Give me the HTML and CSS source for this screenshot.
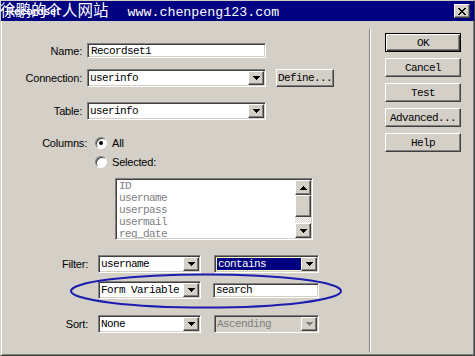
FILE: index.html
```html
<!DOCTYPE html>
<html lang="zh-CN">
<head>
  <meta charset="UTF-8">
  <title>Recordset</title>
  <link rel="stylesheet" href="styles.css">
</head>
<body>
  <div class="window">

    <!-- Title bar -->
    <div class="titlebar">
      <span class="title">Recordset</span>
      <span class="watermark">徐鹏的个人网站<span class="url">www.chenpeng123.com</span></span>
      <span class="close">
        <svg width="8" height="7" viewBox="0 0 8 7" shape-rendering="crispEdges">
          <path d="M0 0h2v1h1v1h2v-1h1v-1h2v1h-1v1h-1v1h-1v1h1v1h1v1h1v1h-2v-1h-1v-1h-2v1h-1v1h-2v-1h1v-1h1v-1h1v-1h-1v-1h-1v-1h-1z"/>
        </svg>
      </span>
    </div>

    <div class="dialog">
      <!-- Left: recordset form -->
      <div class="form">
        <div class="row row-name">
          <span class="label">Name:</span>
          <div class="field wide mono">Recordset1</div>
        </div>

        <div class="row row-connection">
          <span class="label">Connection:</span>
          <div class="combo wide">
            <span class="value mono">userinfo</span>
            <span class="arrow"><svg width="7" height="4" shape-rendering="crispEdges"><path d="M0 0h7v1h-1v1h-1v1h-1v1h-1v-1h-1v-1h-1v-1h-1z"/></svg></span>
          </div>
          <div class="btn define mono">Define...</div>
        </div>

        <div class="row row-table">
          <span class="label">Table:</span>
          <div class="combo wide">
            <span class="value mono">userinfo</span>
            <span class="arrow"><svg width="7" height="4" shape-rendering="crispEdges"><path d="M0 0h7v1h-1v1h-1v1h-1v1h-1v-1h-1v-1h-1v-1h-1z"/></svg></span>
          </div>
        </div>

        <div class="row row-columns">
          <span class="label label-columns">Columns:</span>
          <span class="radio checked"></span>
          <span class="radio-text">All</span>
        </div>
        <div class="row row-selected">
          <span class="radio"></span>
          <span class="radio-text">Selected:</span>
        </div>

        <div class="listbox">
          <div class="items mono">
            <div>ID</div>
            <div>username</div>
            <div>userpass</div>
            <div>usermail</div>
            <div>reg_date</div>
          </div>
          <div class="scrollbar">
            <span class="scroll-btn"><svg width="7" height="4" shape-rendering="crispEdges"><path d="M3 0h1v1h1v1h1v1h1v1h-7v-1h1v-1h1v-1h1z"/></svg></span>
            <span class="thumb"></span>
            <span class="track"></span>
            <span class="scroll-btn"><svg width="7" height="4" shape-rendering="crispEdges"><path d="M0 0h7v1h-1v1h-1v1h-1v1h-1v-1h-1v-1h-1v-1h-1z"/></svg></span>
          </div>
        </div>

        <div class="filters">
          <div class="row row-filter">
            <span class="label">Filter:</span>
            <div class="combo narrow">
              <span class="value mono">username</span>
              <span class="arrow"><svg width="7" height="4" shape-rendering="crispEdges"><path d="M0 0h7v1h-1v1h-1v1h-1v1h-1v-1h-1v-1h-1v-1h-1z"/></svg></span>
            </div>
            <div class="combo mid">
              <span class="value mono"><span class="selected">contains</span></span>
              <span class="arrow"><svg width="7" height="4" shape-rendering="crispEdges"><path d="M0 0h7v1h-1v1h-1v1h-1v1h-1v-1h-1v-1h-1v-1h-1z"/></svg></span>
            </div>
          </div>

          <div class="row row-variable">
            <span class="label"></span>
            <div class="combo narrow">
              <span class="value mono">Form Variable</span>
              <span class="arrow"><svg width="7" height="4" shape-rendering="crispEdges"><path d="M0 0h7v1h-1v1h-1v1h-1v1h-1v-1h-1v-1h-1v-1h-1z"/></svg></span>
            </div>
            <div class="field search mono">search</div>
          </div>

          <div class="row row-sort">
            <span class="label">Sort:</span>
            <div class="combo narrow">
              <span class="value mono">None</span>
              <span class="arrow"><svg width="7" height="4" shape-rendering="crispEdges"><path d="M0 0h7v1h-1v1h-1v1h-1v1h-1v-1h-1v-1h-1v-1h-1z"/></svg></span>
            </div>
            <div class="combo mid disabled">
              <span class="value mono">Ascending</span>
              <span class="arrow"><svg width="7" height="4" shape-rendering="crispEdges"><path d="M0 0h7v1h-1v1h-1v1h-1v1h-1v-1h-1v-1h-1v-1h-1z"/></svg></span>
            </div>
          </div>

          <!-- hand-drawn highlight round the variable row -->
          <svg class="highlight" width="274" height="38" viewBox="0 0 274 38">
            <ellipse cx="137" cy="19" rx="135" ry="16.5" fill="none" stroke="#1c1cb0" stroke-width="2"/>
          </svg>
        </div>
      </div>

      <div class="separator"></div>

      <!-- Right: dialog buttons -->
      <div class="buttons">
        <div class="btn default mono">OK</div>
        <div class="btn mono">Cancel</div>
        <div class="btn mono">Test</div>
        <div class="btn mono">Advanced...</div>
        <div class="btn mono">Help</div>
      </div>
    </div>
  </div>
</body>
</html>
```

FILE: styles.css
```css
/* General styles */
body {
  margin: 0;
  background-color: #d4d0c8;
  font-family: 'Liberation Sans', Arial, sans-serif;
  font-size: 11px;
  color: #000;
}

.mono {
  font-family: 'Liberation Mono', 'Courier New', monospace;
  font-size: 11px;
  letter-spacing: -0.6px;
}

.window {
  width: 475px;
  height: 356px;
  box-sizing: border-box;
  border: 1px solid;
  border-color: #d4d0c8 #404040 #404040 #d4d0c8;
  box-shadow: inset 1px 1px #fff, inset -1px -1px #808080;
  display: flex;
  flex-direction: column;
}

/* Title bar */
.titlebar {
  position: relative;
  height: 20px;
  background-color: #000080;
  color: #fff;
  display: flex;
  align-items: center;
  flex-shrink: 0;
}

.title {
  font-weight: bold;
  margin-left: 5px;
}

.watermark {
  position: absolute;
  left: -1px;
  top: -1px;
  font-family: 'Noto Sans CJK SC', sans-serif;
  font-size: 15.5px;
  line-height: 18px;
  white-space: nowrap;
  color: #fff;
}

.watermark .url {
  font-family: 'Liberation Mono', monospace;
  font-size: 13.3px;
  margin-left: 19px;
}

.close {
  margin-left: auto;
  margin-right: 4px;
  width: 16px;
  height: 14px;
  box-sizing: border-box;
  background-color: #d4d0c8;
  border: 1px solid;
  border-color: #fff #404040 #404040 #fff;
  box-shadow: inset -1px -1px #808080;
  display: flex;
  align-items: center;
  justify-content: center;
}

/* Dialog body */
.dialog {
  display: flex;
  flex: 1;
}

.form {
  width: 368px;
  padding-top: 22px;
  flex-shrink: 0;
}

.row {
  display: flex;
  align-items: center;
}

.label {
  width: 81px;
  margin-right: 5px;
  text-align: right;
  flex-shrink: 0;
  letter-spacing: -0.2px;
}

.row-name { height: 15px; }
.row-connection { height: 18px; margin-top: 11px; }
.row-table { height: 18px; margin-top: 15px; }
.row-columns { height: 14px; margin-top: 16px; }
.row-selected { height: 14px; margin-top: 5px; padding-left: 94px; }

.label-columns {
  width: 86px;
  margin-right: 8px;
}

.radio-text {
  margin-left: 5px;
  letter-spacing: -0.2px;
}

.radio {
  position: relative;
  width: 12px;
  height: 12px;
  box-sizing: border-box;
  border-radius: 50%;
  background-color: #fff;
  border: 1px solid;
  border-color: #808080 #fff #fff #808080;
  box-shadow: inset 1px 1px #404040;
}

.radio.checked::after {
  content: '';
  position: absolute;
  left: 3px;
  top: 3px;
  width: 4px;
  height: 4px;
  border-radius: 50%;
  background-color: #000;
}

/* Fields and combo boxes */
.field {
  height: 15px;
  box-sizing: border-box;
  background-color: #fff;
  border: 1px solid;
  border-color: #808080 #fff #fff #808080;
  box-shadow: inset 1px 1px #404040, inset -1px -1px #d4d0c8;
  padding-left: 3px;
  display: flex;
  align-items: center;
}

.combo {
  height: 18px;
  box-sizing: border-box;
  background-color: #fff;
  border: 1px solid;
  border-color: #808080 #fff #fff #808080;
  box-shadow: inset 1px 1px #404040, inset -1px -1px #d4d0c8;
  padding: 1px;
  display: flex;
}

.combo .value {
  flex: 1;
  display: flex;
  align-items: center;
  padding-left: 1px;
  white-space: nowrap;
  overflow: hidden;
}

.combo .arrow {
  width: 16px;
  box-sizing: border-box;
  background-color: #d4d0c8;
  border: 1px solid;
  border-color: #fff #404040 #404040 #fff;
  box-shadow: inset -1px -1px #808080;
  display: flex;
  align-items: center;
  justify-content: center;
}

.combo.disabled {
  background-color: #d4d0c8;
}

.combo.disabled .value {
  color: #808080;
}

.combo.disabled svg {
  fill: #808080;
}

.selected {
  background-color: #000080;
  color: #fff;
  outline: 1px dotted #f0f0a0;
  padding: 0 1px;
  width: 84px;
  line-height: 12px;
}

.wide { width: 179px; }
.narrow { width: 103px; }
.mid { width: 105px; margin-left: 13px; }

.search {
  width: 106px;
  margin-left: 12px;
  padding-left: 2px;
}

/* Buttons */
.btn {
  width: 76px;
  height: 19px;
  box-sizing: border-box;
  background-color: #d4d0c8;
  border: 1px solid;
  border-color: #fff #404040 #404040 #fff;
  box-shadow: inset -1px -1px #808080;
  display: flex;
  align-items: center;
  justify-content: center;
}

.btn.default {
  border-color: #000;
  box-shadow: inset 1px 1px #fff, inset -1px -1px #404040, inset -2px -2px #808080;
}

.define {
  width: 58px;
  height: 18px;
  margin-left: 10px;
}

.buttons {
  display: flex;
  flex-direction: column;
  gap: 6px;
  padding: 12px 0 0 14px;
}

.separator {
  width: 1px;
  background-color: #808080;
  border-right: 1px solid #fff;
  margin: 8px 0 3px;
}

/* Column list */
.listbox {
  margin-top: 9px;
  margin-left: 114px;
  width: 198px;
  height: 62px;
  box-sizing: border-box;
  background-color: #fff;
  border: 1px solid;
  border-color: #808080 #fff #fff #808080;
  box-shadow: inset 1px 1px #404040, inset -1px -1px #d4d0c8;
  padding: 1px;
  display: flex;
}

.items {
  flex: 1;
  color: #808080;
  line-height: 12px;
  padding-left: 2px;
  overflow: hidden;
}

.scrollbar {
  width: 16px;
  display: flex;
  flex-direction: column;
}

.scroll-btn,
.thumb {
  box-sizing: border-box;
  background-color: #d4d0c8;
  border: 1px solid;
  border-color: #fff #404040 #404040 #fff;
  box-shadow: inset -1px -1px #808080;
}

.scroll-btn {
  height: 15px;
  display: flex;
  align-items: center;
  justify-content: center;
}

.thumb {
  height: 22px;
}

.track {
  flex: 1;
  background: repeating-conic-gradient(#d4d0c8 0 25%, #fff 0 50%) 0 0 / 2px 2px;
}

/* Filter block */
.filters {
  position: relative;
}

.row-filter { height: 18px; margin-top: 15px; }
.row-variable { height: 18px; margin-top: 8px; }
.row-sort { height: 18px; margin-top: 16px; }

.filters .label {
  width: 87px;
  margin-right: 10px;
}

.highlight {
  position: absolute;
  left: 68px;
  top: 17px;
}
```
